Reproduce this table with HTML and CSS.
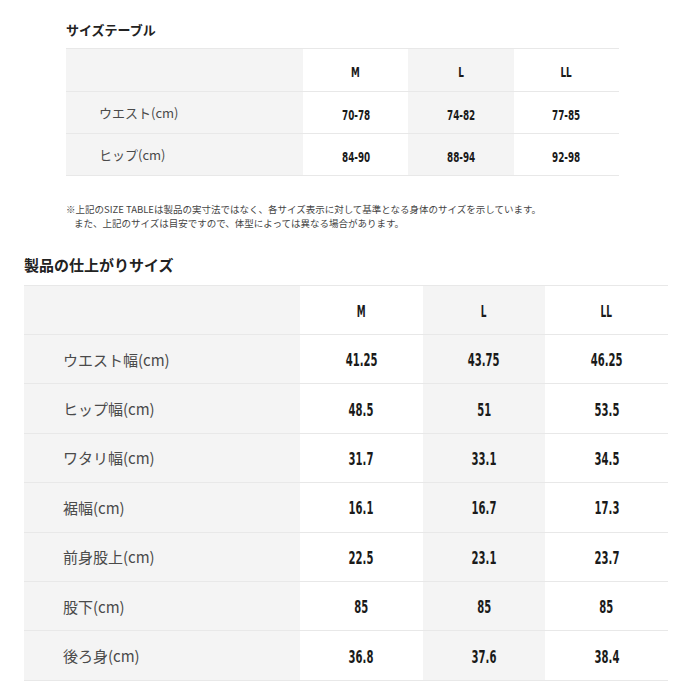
FILE: index.html
```html
<!DOCTYPE html>
<html lang="ja">
<head>
<meta charset="utf-8">
<title>サイズテーブル</title>
<link rel="stylesheet" href="styles.css">
</head>
<body>
<section class="sec sec-a">
  <h2 class="title title-a">サイズテーブル</h2>
  <table class="tbl tbl-a">
    <tr class="head"><td class="lab"></td><td class="c1"><span class="num">M</span></td><td class="c2"><span class="num">L</span></td><td class="c3"><span class="num">LL</span></td></tr>
    <tr><td class="lab">ウエスト(cm)</td><td class="c1"><span class="num">70-78</span></td><td class="c2"><span class="num">74-82</span></td><td class="c3"><span class="num">77-85</span></td></tr>
    <tr><td class="lab">ヒップ(cm)</td><td class="c1"><span class="num">84-90</span></td><td class="c2"><span class="num">88-94</span></td><td class="c3"><span class="num">92-98</span></td></tr>
  </table>
  <p class="note">※上記のSIZE TABLEは製品の実寸法ではなく、各サイズ表示に対して基準となる身体のサイズを示しています。<br><span class="indent">また、上記のサイズは目安ですので、体型によっては異なる場合があります。</span></p>
</section>
<section class="sec sec-b">
  <h2 class="title title-b">製品の仕上がりサイズ</h2>
  <table class="tbl tbl-b">
    <tr class="head"><td class="lab"></td><td class="c1"><span class="num">M</span></td><td class="c2"><span class="num">L</span></td><td class="c3"><span class="num">LL</span></td></tr>
    <tr><td class="lab">ウエスト幅(cm)</td><td class="c1"><span class="num">41.25</span></td><td class="c2"><span class="num">43.75</span></td><td class="c3"><span class="num">46.25</span></td></tr>
    <tr><td class="lab">ヒップ幅(cm)</td><td class="c1"><span class="num">48.5</span></td><td class="c2"><span class="num">51</span></td><td class="c3"><span class="num">53.5</span></td></tr>
    <tr><td class="lab">ワタリ幅(cm)</td><td class="c1"><span class="num">31.7</span></td><td class="c2"><span class="num">33.1</span></td><td class="c3"><span class="num">34.5</span></td></tr>
    <tr><td class="lab">裾幅(cm)</td><td class="c1"><span class="num">16.1</span></td><td class="c2"><span class="num">16.7</span></td><td class="c3"><span class="num">17.3</span></td></tr>
    <tr><td class="lab">前身股上(cm)</td><td class="c1"><span class="num">22.5</span></td><td class="c2"><span class="num">23.1</span></td><td class="c3"><span class="num">23.7</span></td></tr>
    <tr><td class="lab">股下(cm)</td><td class="c1"><span class="num">85</span></td><td class="c2"><span class="num">85</span></td><td class="c3"><span class="num">85</span></td></tr>
    <tr><td class="lab">後ろ身(cm)</td><td class="c1"><span class="num">36.8</span></td><td class="c2"><span class="num">37.6</span></td><td class="c3"><span class="num">38.4</span></td></tr>
  </table>
</section>
</body>
</html>
```
FILE: styles.css
```css
html, body {
  margin: 0;
  padding: 0;
  background: #ffffff;
}
body {
  font-family: "Noto Sans CJK JP", "Noto Sans", sans-serif;
  color: #333333;
}
.sec-a {
  padding: 21px 0 0 66px;
  width: 553px;
}
.sec-b {
  padding: 0 0 0 24px;
  width: 644px;
}
.title {
  margin: 0;
  font-weight: 700;
  color: #222222;
}
.title-a {
  font-size: 13px;
  line-height: 18px;
  height: 27px;
}
.title-b {
  font-size: 15px;
  line-height: 20px;
  padding-top: 3px;
  height: 30px;
}
.tbl {
  border-collapse: collapse;
  width: 100%;
  table-layout: fixed;
}
.tbl td {
  border-top: 1px solid #e8e8e8;
  border-bottom: 1px solid #e8e8e8;
  padding: 0;
  text-align: center;
  vertical-align: middle;
}
.tbl .lab {
  text-align: left;
  background: #f4f4f4;
  color: #4a4a4a;
}
.tbl .c1, .tbl .c3 { background: #ffffff; }
.tbl .c2 { background: #f4f4f4; }
.num {
  display: inline-block;
  font-family: "DejaVu Sans Condensed", "DejaVu Sans", sans-serif;
  font-stretch: condensed;
  font-weight: 700;
  color: #1a1a1a;
  transform: scaleX(0.7);
}
.tbl-a td { height: 41px; }
.tbl-a .head td { height: 42px; }
.tbl-a .lab { width: 204px; padding-left: 33px; font-size: 13px; }
.tbl-a .num { font-size: 14px; }
.tbl-a .head .num { font-size: 14px; }
.tbl-b td { height: 48.4px; }
.tbl-b .head td { height: 48px; }
.tbl-b .lab { width: 237px; padding-left: 39px; font-size: 15px; }
.tbl-b .num { font-size: 18px; transform: scaleX(0.62); }
.tbl-b .head .num { font-size: 16px; }
.note {
  margin: 26px 0 0 0;
  font-size: 9.5px;
  line-height: 14px;
  color: #444444;
  height: 50px;
}
.indent { padding-left: 8px; }
```
